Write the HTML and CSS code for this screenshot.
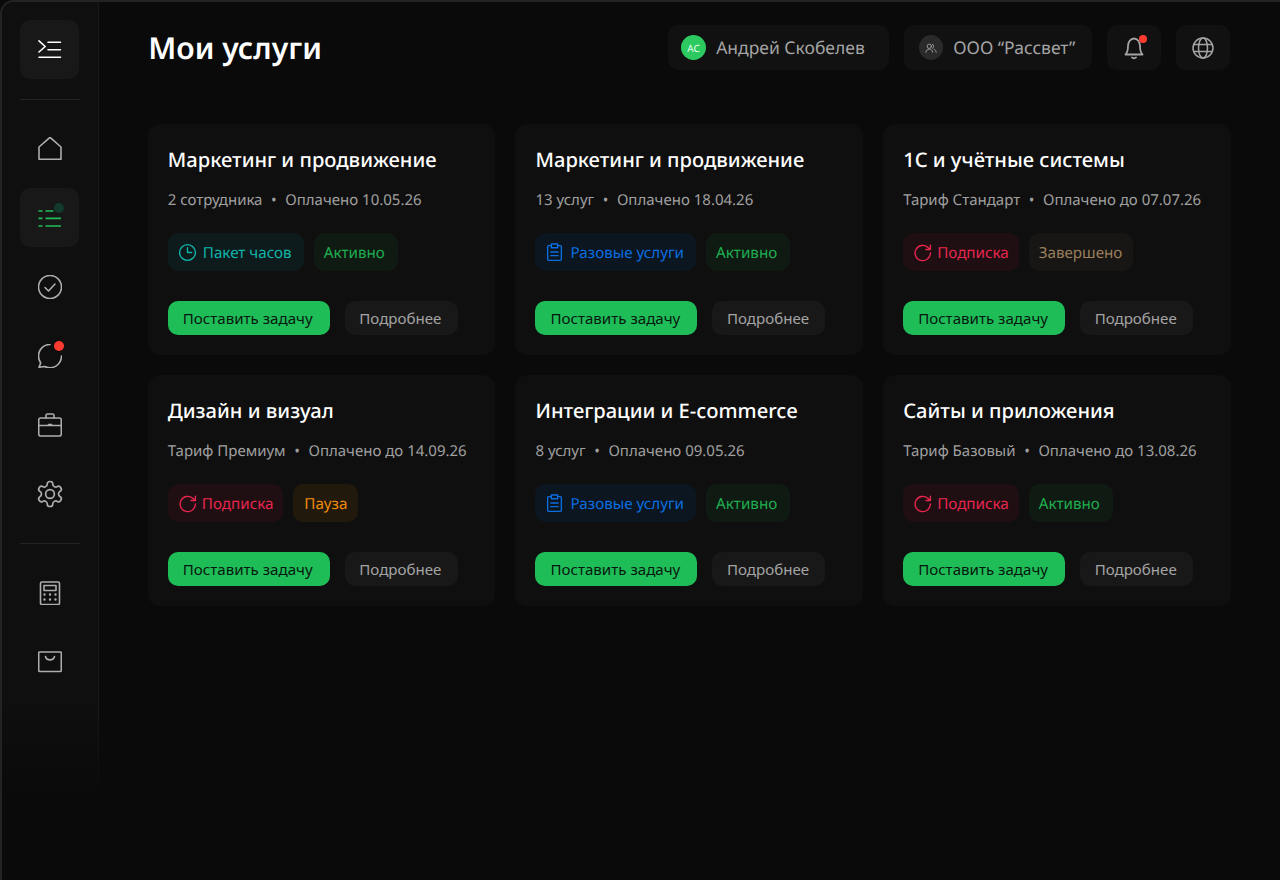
FILE: index.html
```html
<!DOCTYPE html>
<html lang="ru">
<head>
<meta charset="utf-8">
<title>Мои услуги</title>
<link rel="stylesheet" href="styles.css">
</head>
<body>
<div class="screen">
  <div class="frame">
    <aside class="sidebar">
      <button class="side-btn boxed white">
        <svg viewBox="0 0 24 24" class="ico24"><path d="M1 2.800 7.200 8.500 1 14M10 4.200H22.500M10 11.800H22.500M1 19.200H22.500"/></svg>
      </button>
      <div class="divider"></div>
      <nav class="side-group">
        <button class="side-btn"><svg viewBox="0 0 24 24" class="ico24"><path d="M1 22.300H23V10L12 .3 1 10Z"/></svg></button>
        <button class="side-btn boxed green badged">
          <svg viewBox="0 0 24 24" class="ico24 butt"><path d="M.5 5H4.500M7.500 5H15.500M.5 12.300H4.500M7.500 12.300H23M.5 20H4.500M7.500 20H23"/></svg>
          <span class="dot dot-green"></span>
        </button>
        <button class="side-btn"><svg viewBox="0 0 24 24" class="ico24"><circle cx="12" cy="12" r="11.500"/><path d="M7 12.500 10.500 16 17 9"/></svg></button>
        <button class="side-btn badged">
          <svg viewBox="0 0 24 24" class="ico24"><path d="M12 .5C5.500.5.500 5.500.5 12c0 2.500.8 5 2.200 7L1 23.300l5.500-.8c1.700.8 3.500 1.200 5.500 1.200 6.500 0 11.500-5.200 11.500-11.700"/></svg>
          <span class="dot dot-red"></span>
        </button>
        <button class="side-btn"><svg viewBox="0 0 24 24" class="ico24"><rect x=".7" y="5" width="22.600" height="18" rx="2"/><path d="M8 5V2.500Q8 1 9.500 1H14.500Q16 1 16 2.500V5M.7 12.500H23.300M10.500 11.500H13.500"/></svg></button>
        <button class="side-btn"><svg viewBox="0 0 24 24" class="ico30"><circle cx="12" cy="12" r="3.500"/><path d="M12.220 2h-.44a2 2 0 0 0-2 2v.18a2 2 0 0 1-1 1.730l-.43.250a2 2 0 0 1-2 0l-.15-.08a2 2 0 0 0-2.730.730l-.22.380a2 2 0 0 0 .73 2.730l.15.100a2 2 0 0 1 1 1.720v.510a2 2 0 0 1-1 1.740l-.15.090a2 2 0 0 0-.73 2.730l.22.380a2 2 0 0 0 2.730.730l.15-.08a2 2 0 0 1 2 0l.43.250a2 2 0 0 1 1 1.730V20a2 2 0 0 0 2 2h.44a2 2 0 0 0 2-2v-.18a2 2 0 0 1 1-1.730l.43-.250a2 2 0 0 1 2 0l.15.080a2 2 0 0 0 2.730-.730l.22-.390a2 2 0 0 0-.73-2.730l-.15-.080a2 2 0 0 1-1-1.740v-.5a2 2 0 0 1 1-1.740l.15-.090a2 2 0 0 0 .73-2.730l-.22-.380a2 2 0 0 0-2.730-.730l-.15.080a2 2 0 0 1-2 0l-.43-.250a2 2 0 0 1-1-1.730V4a2 2 0 0 0-2-2z"/></svg></button>
      </nav>
      <div class="divider lower"></div>
      <nav class="side-group">
        <button class="side-btn"><svg viewBox="0 0 24 24" class="ico24"><rect x="2.500" y="1" width="19" height="22.500" rx="1.500"/><rect x="6" y="4.500" width="12" height="5"/><path class="dots" d="M6.500 13.500h.01M12 13.500h.01M17.500 13.500h.01M6.500 18.500h.01M12 18.500h.01M17.500 18.500h.01"/></svg></button>
        <button class="side-btn"><svg viewBox="0 0 24 24" class="ico24"><rect x=".7" y="2" width="22.600" height="19.500" rx="1"/><path d="M7.500 6.500C8.500 11 15.500 11 16.500 6.500"/></svg></button>
      </nav>
    </aside>
    <main class="main">
      <header class="topbar">
        <h1 class="title">Мои услуги</h1>
        <div class="top-actions">
          <div class="pill"><span class="avatar avatar-green">АС</span><span>Андрей Скобелев</span></div>
          <div class="pill pill-org"><span class="avatar avatar-gray"><svg viewBox="0 0 14 14" class="ico12"><circle cx="5" cy="5" r="2.500"/><path d="M1 12c0-5 8-5 8 0M8.500 2.700a2.500 2.500 0 0 1 0 4.700M10.500 8.500c1.500.6 2.500 1.800 2.500 3.500"/></svg></span><span>ООО “Рассвет”</span></div>
          <div class="icon-pill badged">
            <svg viewBox="0 0 24 24" class="ico24 bell"><path d="M3.500 18.500C5.500 16.500 6 14 6 10 6 6 8.500 2.500 12 2.500 15.500 2.500 18 6 18 10 18 14 18.500 16.500 20.500 18.500ZM10 21.500C10.700 22.500 13.300 22.500 14 21.500"/></svg>
            <span class="dot-small"></span>
          </div>
          <div class="icon-pill">
            <svg viewBox="0 0 24 24" class="ico24"><circle cx="12" cy="12" r="10"/><ellipse cx="12" cy="12" rx="4.500" ry="10"/><path d="M3 8.500H21M3 15.500H21"/></svg>
          </div>
        </div>
      </header>
      <section class="grid">
        <article class="card">
          <h2>Маркетинг и продвижение</h2>
          <p class="meta"><span>2 сотрудника</span><i>•</i><span>Оплачено 10.05.26</span></p>
          <div class="tags"><span class="tag teal"><svg viewBox="0 0 18 18" class="ico19"><circle cx="9" cy="9" r="7.500"/><path d="M9 4.500V9H13"/></svg>Пакет часов</span><span class="tag active">Активно</span></div>
          <div class="actions"><button class="btn primary">Поставить задачу</button><button class="btn ghost">Подробнее</button></div>
        </article>
        <article class="card">
          <h2>Маркетинг и продвижение</h2>
          <p class="meta"><span>13 услуг</span><i>•</i><span>Оплачено 18.04.26</span></p>
          <div class="tags"><span class="tag blue"><svg viewBox="0 0 18 18" class="ico19"><path d="M5.500 2.500H3.500Q2.500 2.500 2.500 3.500V15.500Q2.500 16.500 3.500 16.500H14.500Q15.500 16.500 15.500 15.500V3.500Q15.500 2.500 14.500 2.500H12.500M6 1H12V4.500H6ZM5.500 8.500H12.500M5.500 12H12.500"/></svg>Разовые услуги</span><span class="tag active">Активно</span></div>
          <div class="actions"><button class="btn primary">Поставить задачу</button><button class="btn ghost">Подробнее</button></div>
        </article>
        <article class="card">
          <h2>1С и учётные системы</h2>
          <p class="meta"><span>Тариф Стандарт</span><i>•</i><span>Оплачено до 07.07.26</span></p>
          <div class="tags"><span class="tag red"><svg viewBox="0 0 18 18" class="ico19"><path d="M16.500 9.500A7.250 7.250 0 1 1 14 4L16.500 6.200M16.500 2V6.200H12.300"/></svg>Подписка</span><span class="tag done">Завершено</span></div>
          <div class="actions"><button class="btn primary">Поставить задачу</button><button class="btn ghost">Подробнее</button></div>
        </article>
        <article class="card">
          <h2>Дизайн и визуал</h2>
          <p class="meta"><span>Тариф Премиум</span><i>•</i><span>Оплачено до 14.09.26</span></p>
          <div class="tags"><span class="tag red"><svg viewBox="0 0 18 18" class="ico19"><path d="M16.500 9.500A7.250 7.250 0 1 1 14 4L16.500 6.200M16.500 2V6.200H12.300"/></svg>Подписка</span><span class="tag pause">Пауза</span></div>
          <div class="actions"><button class="btn primary">Поставить задачу</button><button class="btn ghost">Подробнее</button></div>
        </article>
        <article class="card">
          <h2>Интеграции и E-commerce</h2>
          <p class="meta"><span>8 услуг</span><i>•</i><span>Оплачено 09.05.26</span></p>
          <div class="tags"><span class="tag blue"><svg viewBox="0 0 18 18" class="ico19"><path d="M5.500 2.500H3.500Q2.500 2.500 2.500 3.500V15.500Q2.500 16.500 3.500 16.500H14.500Q15.500 16.500 15.500 15.500V3.500Q15.500 2.500 14.500 2.500H12.500M6 1H12V4.500H6ZM5.500 8.500H12.500M5.500 12H12.500"/></svg>Разовые услуги</span><span class="tag active">Активно</span></div>
          <div class="actions"><button class="btn primary">Поставить задачу</button><button class="btn ghost">Подробнее</button></div>
        </article>
        <article class="card">
          <h2>Сайты и приложения</h2>
          <p class="meta"><span>Тариф Базовый</span><i>•</i><span>Оплачено до 13.08.26</span></p>
          <div class="tags"><span class="tag red"><svg viewBox="0 0 18 18" class="ico19"><path d="M16.500 9.500A7.250 7.250 0 1 1 14 4L16.500 6.200M16.500 2V6.200H12.300"/></svg>Подписка</span><span class="tag active">Активно</span></div>
          <div class="actions"><button class="btn primary">Поставить задачу</button><button class="btn ghost">Подробнее</button></div>
        </article>
      </section>
    </main>
    <div class="fade"></div>
  </div>
</div>
</body>
</html>
```
FILE: styles.css
```css
* { box-sizing: border-box; }
html, body { margin: 0; padding: 0; height: 100%; background: #0a0a0a; }
body { font-family: "Noto Sans", "Open Sans", sans-serif; color: #fff; overflow: hidden; text-rendering: geometricPrecision; }
button { font: inherit; border: 0; padding: 0; background: none; color: inherit; }
svg { display: block; fill: none; stroke: currentColor; stroke-width: 1.5; stroke-linecap: round; stroke-linejoin: round; flex: none; }
.screen { width: 1280px; height: 880px; overflow: hidden; }
.frame { position: relative; display: flex; height: 880px; background: #0a0a0a; border-top: 2px solid #232323; border-left: 2px solid #232323; border-top-left-radius: 14px; overflow: hidden; }
.sidebar { width: 97px; flex: none; background: #0f0f0f; border-right: 1px solid #1a1a1a; padding: 18px 18px 0; display: flex; flex-direction: column; }
.side-group { display: flex; flex-direction: column; gap: 10px; }
.side-btn { position: relative; width: 59px; height: 59px; border-radius: 10px; display: flex; align-items: center; justify-content: center; color: #adadad; }
.boxed { background: #181818; }
.white { color: #fff; }
.green { color: #1fbd58; }
.divider { height: 1px; background: #232323; margin: 20px 0 19px; }
.divider.lower { margin: 20px 0 19px; }
.ico24 { width: 24px; height: 24px; }
.ico30 { width: 30px; height: 30px; }
.ico19 { width: 19px; height: 19px; stroke-width: 1.3; }
.ico12 { width: 12px; height: 12px; stroke-width: 1; }
.side-btn .ico24 { stroke-width: 1.6; }
.side-btn .ico30 { stroke-width: 1.35; }
.side-btn .butt { stroke-linecap: butt; stroke-width: 1.7; }
.bell { stroke-width: 1.8; }
.side-btn .dots { stroke-width: 2.4; }
.dot { position: absolute; width: 10px; height: 10px; border-radius: 50%; left: 34px; top: 15px; }
.dot-green { background: #123b2b; }
.dot-red { background: #ff3b30; }
.main { flex: 1; min-width: 0; padding: 23px 49.2px 0 48.8px; display: flex; flex-direction: column; }
.topbar { display: flex; align-items: center; justify-content: space-between; height: 45px; margin-bottom: 54px; }
.title { margin: 0 0 0 .4px; font-size: 30.2px; font-weight: 600; line-height: 45px; }
.top-actions { display: flex; gap: 15px; margin-right: .5px; }
.pill, .icon-pill { height: 45px; border-radius: 10px; background: #111; display: flex; align-items: center; color: #a4a4a4; font-size: 17.5px; }
.pill { padding: 0 24.5px 0 13.5px; gap: 10px; }
.pill-org { padding: 0 17px 0 15px; }
.icon-pill { position: relative; width: 54px; justify-content: center; }
.avatar { width: 25px; height: 25px; border-radius: 50%; display: flex; align-items: center; justify-content: center; font-size: 10px; }
.avatar-green { background: #2bc95f; color: #e8fff0; }
.avatar-gray { background: #2a2a2a; color: #aaa; width: 24px; }
.dot-small { position: absolute; width: 8px; height: 8px; border-radius: 50%; background: #ff3b30; left: 32px; top: 10px; }
.grid { display: grid; grid-template-columns: repeat(3, 1fr); grid-auto-rows: 231px; gap: 20px; }
.card { background: #0f0f0f; border-radius: 12px; padding: 20px; display: flex; flex-direction: column; }
.card h2 { margin: 0; font-size: 20.15px; font-weight: 500; line-height: 31px; }
.meta { margin: 15px 0 0; font-size: 15px; line-height: 20px; color: #a0a0a0; display: flex; }
.meta i { font-style: normal; margin: 0 8.6px; }
.tags { display: flex; gap: 10px; margin-top: 23px; }
.tag { height: 38px; border-radius: 10px; padding: 1px 12px 0 10px; display: inline-flex; align-items: center; gap: 6px; font-size: 15.2px; }
.teal { color: #10b5aa; background: #0d1b1c; }
.blue { color: #0a6ee0; background: #0b1620; }
.red { color: #e8264e; background: #1f0f13; padding-right: 10px; gap: 5px; }
.active { color: #1fae50; background: #0f1a12; padding-right: 13px; }
.done { color: #9a7f5c; background: #181614; padding-right: 11px; }
.pause { color: #f18c0a; background: #21190c; padding: 1px 11px 0; }
.actions { display: flex; gap: 15px; margin-top: 30px; }
.btn { height: 34px; border-radius: 10px; padding: 0 0 0 15px; font-size: 15.1px; line-height: 34px; text-align: left; }
.primary { background: #1fbd58; color: #08170e; width: 162px; }
.ghost { background: #181818; color: #a4a4a4; width: 113px; padding-left: 14.5px; }
.fade { position: absolute; left: 0; right: 0; bottom: 0; height: 180px; margin-left: -2px; background: linear-gradient(to bottom, rgba(10,10,10,0), #0a0a0a 55%); pointer-events: none; }
```
